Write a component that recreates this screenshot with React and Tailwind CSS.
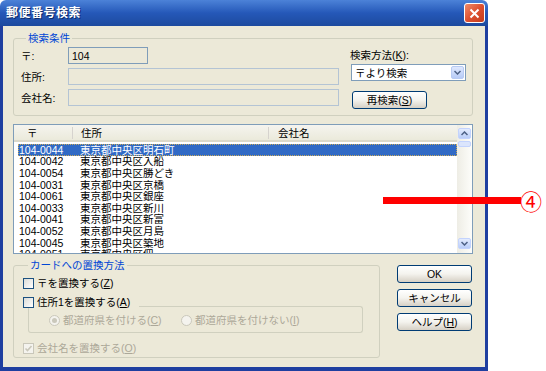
import React from "react";

const rows = [
  ["104-0044", "東京都中央区明石町"],
  ["104-0042", "東京都中央区入船"],
  ["104-0054", "東京都中央区勝どき"],
  ["104-0031", "東京都中央区京橋"],
  ["104-0061", "東京都中央区銀座"],
  ["104-0033", "東京都中央区新川"],
  ["104-0041", "東京都中央区新富"],
  ["104-0052", "東京都中央区月島"],
  ["104-0045", "東京都中央区築地"],
  ["104-0051", "東京都中央区佃"],
];

const font = "font-['Liberation_Sans','Noto_Sans_CJK_JP',sans-serif]";

const Key = ({ k }) => (
  <>
    (<span className="underline">{k}</span>)
  </>
);

const Checkbox = ({ checked, disabled }) => (
  <span
    className={`flex h-[11px] w-[11px] shrink-0 items-center justify-center border ${
      disabled
        ? "border-[#c9c7ba] bg-[#f4f3ee]"
        : "border-[#1c5180] bg-gradient-to-br from-[#dcdcd7] to-white"
    }`}
  >
    {checked && (
      <svg width="9" height="9" viewBox="0 0 9 9">
        <path d="M1.5 4.5 L3.5 6.5 L7.5 2" stroke="#c9c7ba" strokeWidth="1.6" fill="none" />
      </svg>
    )}
  </span>
);

const Radio = ({ checked }) => (
  <span className="flex h-[11px] w-[11px] shrink-0 items-center justify-center rounded-full border border-[#cac8bb] bg-[#f4f3ee]">
    {checked && <span className="h-[5px] w-[5px] rounded-full bg-[#cac8bb]" />}
  </span>
);

const Btn = ({ children }) => (
  <button className="flex h-[18px] w-[75px] items-center justify-center rounded-[3px] border border-[#003c74] bg-gradient-to-b from-white via-[#f4f3ee] to-[#d6d0c5] text-[10.5px] leading-none text-black">
    {children}
  </button>
);

const Chevron = ({ up }) => (
  <svg width="7" height="5" viewBox="0 0 7 5">
    <path
      d={up ? "M0.5 4 L3.5 1 L6.5 4" : "M0.5 1 L3.5 4 L6.5 1"}
      stroke="#4d6185"
      strokeWidth="1.5"
      fill="none"
    />
  </svg>
);

export default function App() {
  return (
    <div className={`relative h-[371px] w-[546px] overflow-hidden bg-white ${font}`}>
      <div className="flex h-[371px] w-[488px] flex-col">
        {/* title bar */}
        <div className="flex h-[26px] shrink-0 items-center justify-between rounded-t-[6px] bg-gradient-to-b from-[#4c82d8] via-[#2558b8] to-[#1d4a9e] pl-[6px] pr-[3px]">
          <span className="text-[12px] font-bold tracking-[0.5px] text-white [text-shadow:1px_1px_0_#0b2a6a]">
            郵便番号検索
          </span>
          <span className="flex h-[20px] w-[21px] items-center justify-center rounded-[3px] border border-white bg-gradient-to-br from-[#f08a68] via-[#dd5030] to-[#c43c1c]">
            <svg width="11" height="11" viewBox="0 0 11 11">
              <path d="M1.5 1.5 L9.5 9.5 M9.5 1.5 L1.5 9.5" stroke="white" strokeWidth="2" />
            </svg>
          </span>
        </div>

        {/* body */}
        <div className="flex flex-1 flex-col border-x-[3px] border-b-[4px] border-[#1f3fa0] bg-[#ece9d8] pl-[10px] pr-[12px] pt-[6px] text-[10.5px] leading-[12px] text-black">
          {/* 検索条件 */}
          <fieldset className="h-[84px] rounded-[3px] border border-[#d0d0bf] pb-[8px] pl-[7px] pr-[5px]">
            <legend className="ml-[5px] px-[2px] text-[#0046d5]">検索条件</legend>
            <div className="mt-[3px] flex justify-between">
              <div className="flex flex-col gap-[4px]">
                <div className="flex h-[17px] items-center">
                  <span className="w-[47px]">〒:</span>
                  <div className="flex h-[17px] w-[80px] items-center border border-[#7f9db9] bg-[#ece9d8] px-[3px]">
                    104
                  </div>
                </div>
                <div className="flex h-[17px] items-center">
                  <span className="w-[47px]">住所:</span>
                  <div className="h-[17px] w-[271px] border border-[#b4c4d4] bg-[#ece9d8]" />
                </div>
                <div className="flex h-[17px] items-center">
                  <span className="w-[47px]">会社名:</span>
                  <div className="h-[17px] w-[271px] border border-[#b4c4d4] bg-[#ece9d8]" />
                </div>
              </div>
              <div className="flex w-[116px] flex-col pt-[2px]">
                <span className="ml-[-1px] h-[13px]">
                  検索方法<Key k="K" />:
                </span>
                <div className="mt-[2px] flex h-[17px] w-[115px] items-center justify-between border border-[#7f9db9] bg-white pl-[3px] pr-[1px]">
                  <span>〒より検索</span>
                  <span className="flex h-[13px] w-[13px] items-center justify-center rounded-[2px] border border-[#b8cbf3] bg-gradient-to-b from-[#dfe8fe] to-[#b7cbf6]">
                    <Chevron />
                  </span>
                </div>
                <div className="ml-[1px] mt-[10px]">
                  <Btn>
                    再検索<Key k="S" />
                  </Btn>
                </div>
              </div>
            </div>
          </fieldset>

          {/* list */}
          <div className="mt-[8px] flex h-[130px] w-[460px] border border-[#7f9db9] bg-white">
            <div className="flex flex-1 flex-col overflow-hidden">
              <div className="flex h-[17px] shrink-0 items-center border-b-[2px] border-[#dcd9c9] bg-gradient-to-b from-[#f5f4ef] to-[#ebeadb]">
                <span className="w-[59px] border-r border-[#d6d3ce] pl-[13px]">〒</span>
                <span className="w-[196px] border-r border-[#d6d3ce] pl-[8px]">住所</span>
                <span className="pl-[9px]">会社名</span>
              </div>
              <div className="flex flex-col pl-[4px] pt-[2px]">
                {rows.map(([zip, addr], i) => (
                  <div
                    key={zip}
                    className={`flex h-[11.6px] shrink-0 items-center ${
                      i === 0
                        ? "border border-dotted border-[#c9a95a] bg-[#316ac5] text-white"
                        : "border border-transparent"
                    }`}
                  >
                    <span className="w-[61px] pl-[0px] font-['Liberation_Sans',sans-serif]">{zip}</span>
                    <span>{addr}</span>
                  </div>
                ))}
              </div>
            </div>
            {/* scrollbar */}
            <div className="flex w-[15px] flex-col items-center bg-gradient-to-r from-[#eeede5] to-[#fdfdfa] pb-[4px] pt-[3px]">
              <span className="flex h-[11px] w-[13px] items-center justify-center rounded-[2px] border border-[#c3d3fd] bg-gradient-to-b from-[#e4ecfd] to-[#b9cdf8]">
                <Chevron up />
              </span>
              <span className="mt-[2px] h-[6px] w-[13px] rounded-[2px] border border-[#c3d3fd] bg-[#dbe5fc]" />
              <span className="flex-1" />
              <span className="flex h-[11px] w-[13px] items-center justify-center rounded-[2px] border border-[#c3d3fd] bg-gradient-to-b from-[#e4ecfd] to-[#b9cdf8]">
                <Chevron />
              </span>
            </div>
          </div>

          {/* bottom */}
          <div className="mt-[5px] flex">
            <fieldset className="h-[99px] w-[367px] rounded-[3px] border border-[#d0d0bf] pl-[9px] pr-[16px]">
              <legend className="ml-[5px] px-[2px] text-[#0046d5]">カードへの置換方法</legend>
              <div className="mt-[6px] flex h-[12px] items-center gap-[3px]">
                <Checkbox />
                <span>
                  〒を置換する<Key k="Z" />
                </span>
              </div>
              <div className="mt-[7px] flex h-[12px] items-center gap-[3px]">
                <Checkbox />
                <span>
                  住所1を置換する<Key k="A" />
                </span>
                <span className="ml-[6px] mt-[10px] h-[7px] flex-1 self-start rounded-tr-[3px] border-r border-t border-[#d0d0bf]" />
              </div>
              <div className="ml-[5px] flex h-[25px] items-center gap-[12px] rounded-b-[3px] border-x border-b border-[#d0d0bf] pl-[20px] text-[#aca899]">
                <span className="flex w-[120px] items-center gap-[3px]">
                  <Radio checked />
                  <span>
                    都道府県を付ける<Key k="C" />
                  </span>
                </span>
                <span className="flex items-center gap-[3px]">
                  <Radio />
                  <span>
                    都道府県を付けない<Key k="I" />
                  </span>
                </span>
              </div>
              <div className="mt-[9px] flex h-[12px] items-center gap-[3px] text-[#aca899]">
                <Checkbox checked disabled />
                <span>
                  会社名を置換する<Key k="O" />
                </span>
              </div>
            </fieldset>
            <div className="ml-[17px] mt-[6px] flex flex-col gap-[6px]">
              <Btn>OK</Btn>
              <Btn>キャンセル</Btn>
              <Btn>
                ヘルプ<Key k="H" />
              </Btn>
            </div>
          </div>
        </div>
      </div>

      {/* annotation */}
      <div className="absolute left-[383px] top-[197px] h-[7px] w-[138px] bg-[#ff0000]" />
      <span className="absolute left-[520px] top-[188px] text-[22px] leading-[24px] text-[#ff0000] font-['Noto_Sans_CJK_JP',sans-serif]">
        ④
      </span>
    </div>
  );
}
